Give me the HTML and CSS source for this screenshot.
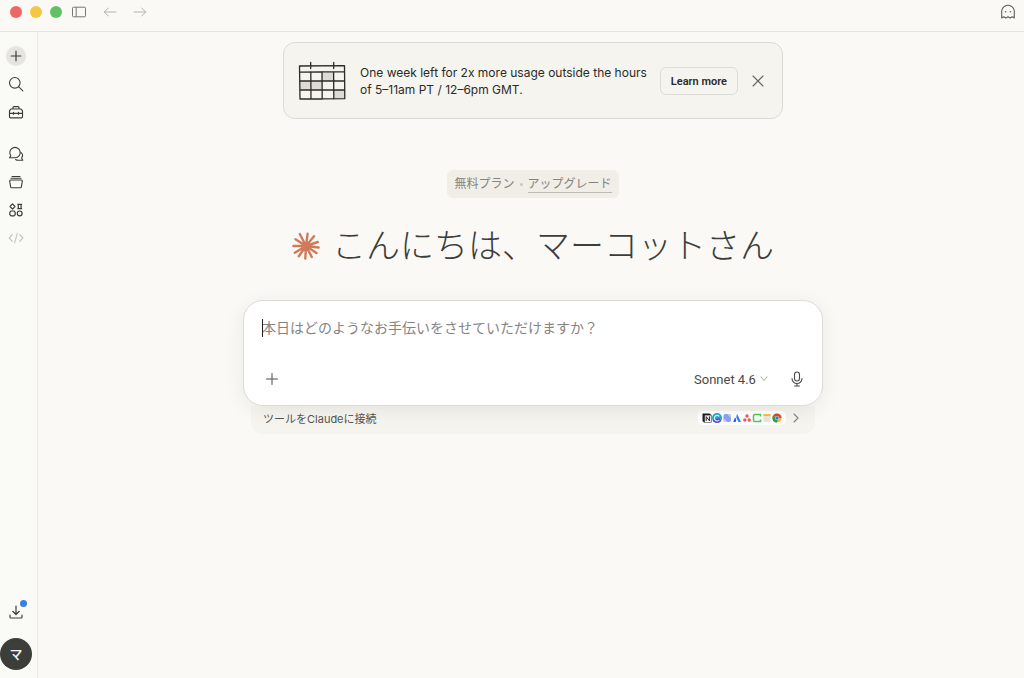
FILE: index.html
```html
<!DOCTYPE html>
<html lang="ja">
<head>
    <meta charset="UTF-8">
    <meta name="viewport" content="width=device-width, initial-scale=1.0">
    <title>Claude</title>
    <link rel="stylesheet" href="styles.css">
</head>
<body>
    <header class="titlebar">
        <div class="traffic-lights">
            <button class="light light-close" aria-label="閉じる"></button>
            <button class="light light-min" aria-label="最小化"></button>
            <button class="light light-max" aria-label="最大化"></button>
        </div>
        <button class="icon-btn panel-btn" aria-label="サイドバー">
            <svg width="16" height="14" viewBox="0 0 16 14" fill="none" stroke="#777672"><rect x="1.5" y="2.2" width="13" height="9.6" rx="1"/><path d="M5.2 2.2v9.6"/></svg>
        </button>
        <button class="icon-btn back-btn" aria-label="戻る">
            <svg width="14" height="12" viewBox="0 0 14 12" fill="none" stroke="#b4b3ae" stroke-linecap="round" stroke-linejoin="round"><path d="M13 6H1.3M5.3 2L1.3 6l4 4"/></svg>
        </button>
        <button class="icon-btn forward-btn" aria-label="進む">
            <svg width="14" height="12" viewBox="0 0 14 12" fill="none" stroke="#b4b3ae" stroke-linecap="round" stroke-linejoin="round"><path d="M1 6h11.7M8.7 2l4 4-4 4"/></svg>
        </button>
        <button class="icon-btn ghost-btn" aria-label="シークレットチャット">
            <svg width="16" height="16" viewBox="0 0 16 16" fill="none" stroke="#5f5e5a" stroke-width="1.1" stroke-linejoin="round"><path d="M1.7 14V7.6a6.3 6.3 0 0 1 12.6 0V14l-2.1-1.3L10.1 14 8 12.7 5.9 14l-2.1-1.3z"/><circle cx="5.7" cy="7.7" r=".8" fill="#5f5e5a" stroke="none"/><circle cx="10.3" cy="7.7" r=".8" fill="#5f5e5a" stroke="none"/></svg>
        </button>
    </header>

    <div class="app">
        <nav class="sidebar">
            <div class="nav-group">
                <button class="nav-btn" aria-label="新規チャット">
                    <span class="new-chat">
                        <svg width="12" height="12" viewBox="0 0 12 12" fill="none" stroke="#3d3d3a" stroke-width="1.2" stroke-linecap="round"><path d="M6 1.2v9.6M1.2 6h9.6"/></svg>
                    </span>
                </button>
                <button class="nav-btn" aria-label="検索">
                    <svg width="16" height="16" viewBox="0 0 16 16" fill="none" stroke="#3d3d3a" stroke-width="1.1" stroke-linecap="round"><circle cx="6.8" cy="6.8" r="5.3"/><path d="M10.8 10.8l4 4"/></svg>
                </button>
                <button class="nav-btn" aria-label="カスタマイズ">
                    <svg width="16" height="16" viewBox="0 0 16 16" fill="none" stroke="#3d3d3a" stroke-width="1.2" stroke-linejoin="round" stroke-linecap="round"><path d="M3.3 5h9.4c.6 0 1.8 1.6 1.8 2.5v5.3c0 .6-.4 1-1 1h-11c-.6 0-1-.4-1-1V7.5c0-.9 1.2-2.5 1.8-2.5zM5 5V3.6c0-.6.4-1 1-1h4c.6 0 1 .4 1 1V5M1.5 9.3h13M5.5 8.3v2M10.5 8.3v2"/></svg>
                </button>
            </div>
            <div class="nav-group">
                <button class="nav-btn" aria-label="チャット">
                    <svg width="16" height="16" viewBox="0 0 16 16" fill="none" stroke="#3d3d3a" stroke-width="1.1" stroke-linejoin="round" stroke-linecap="round"><path d="M1.5 11.8l1.4-2A5.2 5.2 0 1 1 7 11.8z"/><path d="M12.9 6.3c1.7 1.4 2 3.9.7 5.7l1.2 2.3H10.2c-1 0-1.9-.3-2.6-.8"/></svg>
                </button>
                <button class="nav-btn" aria-label="プロジェクト">
                    <svg width="16" height="16" viewBox="0 0 16 16" fill="none" stroke="#3d3d3a" stroke-width="1.1" stroke-linejoin="round" stroke-linecap="round"><path d="M2.8 6h10.4c.7 0 1.2.6 1.1 1.2l-.9 5.6c-.1.6-.5 1-1.1 1H3.7c-.6 0-1-.4-1.1-1l-.9-5.6C1.6 6.6 2.1 6 2.8 6zM3 4.2h10M4 2.5h8"/></svg>
                </button>
                <button class="nav-btn" aria-label="アーティファクト">
                    <svg width="16" height="16" viewBox="0 0 16 16" fill="none" stroke="#3d3d3a" stroke-width="1.2" stroke-linejoin="round"><path d="M4.5 1.9L7 4.5 4.5 7.1 2 4.5zM9.3 2.3h4.8M9.3 6.7h4.8M10.3 2.3v4.4M13.1 2.3v4.4"/><path d="M3 9h3l1.2 1.3v2.2L6 13.8H3l-1.2-1.3v-2.2z"/><circle cx="11.7" cy="11.4" r="2.4"/></svg>
                </button>
                <button class="nav-btn" aria-label="コード">
                    <svg width="16" height="16" viewBox="0 0 16 16" fill="none" stroke="#c3c2be" stroke-width="1.1" stroke-linejoin="round" stroke-linecap="round"><path d="M4.3 4.7L1.2 8l3.1 3.3M11.7 4.7L14.8 8l-3.1 3.3M9.4 3.2L6.6 12.8"/></svg>
                </button>
            </div>
            <div class="nav-bottom">
                <button class="nav-btn download-btn" aria-label="ダウンロード">
                    <svg width="16" height="16" viewBox="0 0 16 16" fill="none" stroke="#3d3d3a" stroke-width="1.2" stroke-linejoin="round" stroke-linecap="round"><path d="M8 2v8.5M4.7 7.3L8 10.5l3.3-3.2M2 11v2.2c0 .5.4.8.8.8h10.4c.5 0 .8-.4.8-.8V11"/></svg>
                    <span class="badge-dot"></span>
                </button>
                <button class="avatar">マ</button>
            </div>
        </nav>

        <main class="main">
            <section class="banner">
                <svg class="calendar" width="48" height="40" viewBox="0 0 48 40" fill="none" stroke="#2b2b28" stroke-width="1.3" stroke-linecap="round" stroke-linejoin="round">
                    <g fill="#dddbd3" stroke="none"><path d="M24 11h12v9H24zM2 20h22v9H2zM36 29h11v9H36z"/></g>
                    <path d="M1.5 5l45-.3.3 33L2 38zM1.6 11.2L46.6 10.7M1.6 20l45.1-.2M1.8 29h45M12.8 11l.2 27M24 11l.2 27M35.6 11l.2 27M12.7 1.5v6M35.7 1.5v6"/>
                </svg>
                <p class="banner-text">One week left for 2x more usage outside the hours of 5–11am PT / 12–6pm GMT.</p>
                <button class="learn-btn">Learn more</button>
                <button class="icon-btn close-btn" aria-label="閉じる">
                    <svg width="12" height="12" viewBox="0 0 12 12" fill="none" stroke="#666561" stroke-width="1.1" stroke-linecap="round"><path d="M1 1l10 10M11 1L1 11"/></svg>
                </button>
            </section>

            <div class="plan">
                <span>無料プラン</span>
                <span class="plan-dot"></span>
                <a href="#" class="plan-link">アップグレード</a>
            </div>

            <h1 class="greeting">
                <svg width="28" height="28" viewBox="0 0 28 28" stroke="#d07a5c" stroke-linecap="round" fill="none">
                    <path stroke-width="2.4" d="M14 14L7.8 2M14 14L15.6 1.8M14 14L22 4.2M14 14L25.8 10M14 14L26.6 15.5M14 14L24.5 21M14 14L19.8 25M14 14L13.3 26.6M14 14L6.8 24.3M14 14L2.8 20.8M14 14L1.4 14M14 14L3.5 7.2"/>
                </svg>
                <span>こんにちは、マーコットさん</span>
            </h1>

            <div class="chat">
                <form class="composer">
                    <div class="prompt">
                        <span class="caret"></span>
                        <textarea class="prompt-input" rows="1" aria-label="メッセージ" placeholder="本日はどのようなお手伝いをさせていただけますか？"></textarea>
                    </div>
                    <div class="composer-bar">
                        <button type="button" class="icon-btn add-btn" aria-label="追加">
                            <svg width="14" height="14" viewBox="0 0 14 14" fill="none" stroke="#4a4a46" stroke-linecap="round"><path d="M7 1.5v11M1.5 7h11"/></svg>
                        </button>
                        <label class="model">
                            <select class="model-select" aria-label="モデル">
                                <option>Sonnet 4.6</option>
                            </select>
                            <svg width="8" height="6" viewBox="0 0 8 6" fill="none" stroke="#a5a49f" stroke-linecap="round" stroke-linejoin="round"><path d="M1 1l3 3.5L7 1"/></svg>
                        </label>
                        <button type="button" class="icon-btn" aria-label="音声入力">
                            <svg width="14" height="16" viewBox="0 0 14 16" fill="none" stroke="#4a4a46" stroke-width="1.1" stroke-linecap="round"><rect x="4.5" y="1" width="5" height="9" rx="2.5"/><path d="M2 7.5a5 5 0 0 0 10 0M7 12.5V15M4.5 15h5"/></svg>
                        </button>
                    </div>
                </form>

                <a href="#" class="tools">
                    <span>ツールをClaudeに接続</span>
                    <span class="tool-icons">
                        <svg viewBox="0 0 10 10"><path d="M.5.6h7l2 1.4v7.6H2L.5 8z" fill="#1f1f1f"/><path d="M2.8 2.4h6.1v6.6H2.8z" fill="#fff"/><path d="M4.2 8V3.6l3.2 4.2V3.3" fill="none" stroke="#222" stroke-width="1"/></svg>
                        <svg viewBox="0 0 10 10"><circle cx="5" cy="5" r="5" fill="#25a9c9"/><path d="M.6 7.2A5 5 0 0 0 9 8L7 5z" fill="#6541dd"/><path d="M7.3 3.3A2.8 2.8 0 1 0 7.3 7" fill="none" stroke="#e8f7ff" stroke-width="1.1"/></svg>
                        <svg viewBox="0 0 10 10"><rect x="1.5" y="1" width="7.5" height="8" rx="2" fill="#929df3"/><path d="M1.5 5l4 4h-2a2 2 0 0 1-2-2zM5 1h2a2 2 0 0 1 2 2v2z" fill="#c7cdfb"/></svg>
                        <svg viewBox="0 0 10 10"><path d="M5 .8L9 9H6.5L4.3 4.5z" fill="#2684ff"/><path d="M3 4.6c1.5 1.3 1.4 3 .6 4.4H1.2z" fill="#1868db"/></svg>
                        <svg viewBox="0 0 10 10" fill="#f05b5f"><circle cx="5" cy="3" r="1.7"/><circle cx="2.8" cy="7" r="1.7"/><circle cx="7.2" cy="7" r="1.7"/></svg>
                        <svg viewBox="0 0 10 10"><path d="M8.5 3.4V1.5H2.7c-.7 0-1.2.5-1.2 1.2v4.6c0 .7.5 1.2 1.2 1.2h5.8V6.6" fill="none" stroke="#4ccb56" stroke-width="1.5"/></svg>
                        <svg viewBox="0 0 10 10"><rect x="1.5" y="1" width="7" height="8" rx="1" fill="#e9e6de"/><path d="M1.5 1h7v2h-7z" fill="#f2c13d"/></svg>
                        <svg viewBox="0 0 10 10"><circle cx="5" cy="5" r="4.6" fill="#f5c02e"/><path d="M5 5H9.5A4.6 4.6 0 0 0 1.1 2.6z" fill="#df4838"/><path d="M1.1 2.6A4.6 4.6 0 0 0 4.8 9.6L6 6z" fill="#2f9b50"/><circle cx="5" cy="5" r="2.1" fill="#fff"/><circle cx="5" cy="5" r="1.7" fill="#4076dc"/></svg>
                    </span>
                    <svg class="tools-arrow" width="6" height="10" viewBox="0 0 6 10" fill="none" stroke="#85847f" stroke-width="1.1" stroke-linecap="round" stroke-linejoin="round"><path d="M1 1l4 4-4 4"/></svg>
                </a>
            </div>
        </main>
    </div>
</body>
</html>
```

FILE: styles.css
```css
* {
    margin: 0;
    padding: 0;
    box-sizing: border-box;
}

body {
    min-height: 100vh;
    display: flex;
    flex-direction: column;
    font-family: Inter, "Noto Sans CJK JP", sans-serif;
    background: #faf9f5;
    color: #3d3d3a;
}

button {
    border: none;
    background: none;
    font: inherit;
    color: inherit;
    cursor: pointer;
}

svg {
    display: block;
    flex: none;
}

/* Title bar */
.titlebar {
    display: flex;
    align-items: center;
    padding: 0 8px 8px 10px;
    height: 32px;
    border-bottom: 1px solid #e6e5e0;
}

.traffic-lights {
    display: flex;
    gap: 8px;
}

.light {
    width: 12px;
    height: 12px;
    border-radius: 50%;
}

.light-close {
    background: #ee6764;
}

.light-min {
    background: #f3c744;
}

.light-max {
    background: #60c264;
}

.icon-btn {
    display: flex;
    align-items: center;
    justify-content: center;
}

.panel-btn {
    margin-left: 9px;
}

.back-btn {
    margin-left: 16px;
}

.forward-btn {
    margin-left: 16px;
}

.ghost-btn {
    margin-left: auto;
}

/* Sidebar */
.app {
    flex: 1;
    display: flex;
}

.sidebar {
    display: flex;
    flex-direction: column;
    gap: 14px;
    width: 38px;
    padding: 10px 0 8px;
    border-right: 1px solid #e8e8e3;
    background: #fafaf7;
}

.nav-group,
.nav-bottom {
    display: flex;
    flex-direction: column;
    align-items: center;
    padding-right: 5px;
}

.nav-btn {
    position: relative;
    display: flex;
    align-items: center;
    justify-content: center;
    width: 28px;
    height: 28px;
}

.new-chat {
    display: flex;
    align-items: center;
    justify-content: center;
    width: 20px;
    height: 20px;
    border-radius: 50%;
    background: #e5e4df;
}

.nav-bottom {
    margin-top: auto;
    gap: 12px;
}

.badge-dot {
    position: absolute;
    top: 2px;
    right: 3px;
    width: 7px;
    height: 7px;
    border-radius: 50%;
    background: #3b7fdb;
}

.avatar {
    width: 32px;
    height: 32px;
    border-radius: 50%;
    background: #3d3d3a;
    color: #faf9f5;
    font-size: 13px;
    line-height: 16px;
    font-weight: 500;
}

/* Main */
.main {
    flex: 1;
    display: flex;
    flex-direction: column;
    align-items: center;
    padding: 10px 16px 24px 20px;
}

.banner {
    display: flex;
    align-items: center;
    width: 100%;
    max-width: 500px;
    padding: 18px 18px 17px 14px;
    border: 1px solid #dcdbd5;
    border-radius: 12px;
    background: #f5f4ef;
    color: #2b2b28;
}

.banner-text {
    flex: 1;
    margin-left: 14px;
    font-size: 12px;
    line-height: 17px;
}

.learn-btn {
    height: 28px;
    margin-left: 8px;
    padding: 0 10px;
    border: 1px solid #dddcd6;
    border-radius: 6px;
    font-family: Roboto, sans-serif;
    font-size: 11px;
    font-weight: 600;
}

.close-btn {
    margin-left: 14px;
}

.plan {
    display: flex;
    align-items: center;
    height: 28px;
    margin-top: 51px;
    padding: 0 7px;
    border-radius: 6px;
    background: #f0eee7;
    font-size: 12px;
    line-height: 16px;
    color: #85847f;
}

.plan-dot {
    width: 3px;
    height: 3px;
    margin: 0 5px;
    border-radius: 50%;
    background: #c9c7bf;
}

.plan-link {
    color: inherit;
    text-decoration: none;
    border-bottom: 1px solid #bdbbb3;
}

.greeting {
    display: flex;
    align-items: center;
    gap: 12px;
    margin-top: 23px;
    font-size: 34px;
    line-height: 50px;
    font-weight: 300;
    color: #3d3d3a;
}

/* Composer */
.chat {
    width: 100%;
    max-width: 580px;
    margin-top: 29px;
}

.composer {
    position: relative;
    padding: 17px 18px 14px;
    border: 1px solid #dcdbd6;
    border-radius: 20px;
    background: #fff;
    box-shadow: 0 4px 20px rgba(0, 0, 0, 0.07);
}

.prompt {
    position: relative;
}

.caret {
    position: absolute;
    top: 1px;
    left: 0;
    width: 1px;
    height: 18px;
    background: #1f1f1d;
}

.prompt-input {
    display: block;
    width: 100%;
    height: 20px;
    border: none;
    outline: none;
    resize: none;
    overflow: hidden;
    background: none;
    font: inherit;
    font-size: 14px;
    line-height: 20px;
    color: inherit;
}

.prompt-input::placeholder {
    color: #85847f;
}

.composer-bar {
    display: flex;
    align-items: center;
    height: 24px;
    margin-top: 29px;
}

.add-btn {
    margin: 0 auto 0 3px;
}

.model {
    display: flex;
    align-items: center;
    gap: 4px;
    margin-right: 22px;
}

.model-select {
    appearance: none;
    border: none;
    background: none;
    font-family: Roboto, sans-serif;
    font-size: 13px;
    color: #4a4a46;
}

.tools {
    display: flex;
    align-items: center;
    height: 28px;
    margin: 0 8px;
    padding: 0 16px 4px 12px;
    border-radius: 0 0 12px 12px;
    background: #f5f4ef;
    font-size: 11px;
    color: #55544f;
    text-decoration: none;
}

.tool-icons {
    display: flex;
    margin-left: auto;
    padding: 2px 4px;
    border-radius: 5px;
    background: #fff;
}

.tool-icons svg {
    width: 10px;
    height: 10px;
}

.tools-arrow {
    margin-left: 7px;
}
```
